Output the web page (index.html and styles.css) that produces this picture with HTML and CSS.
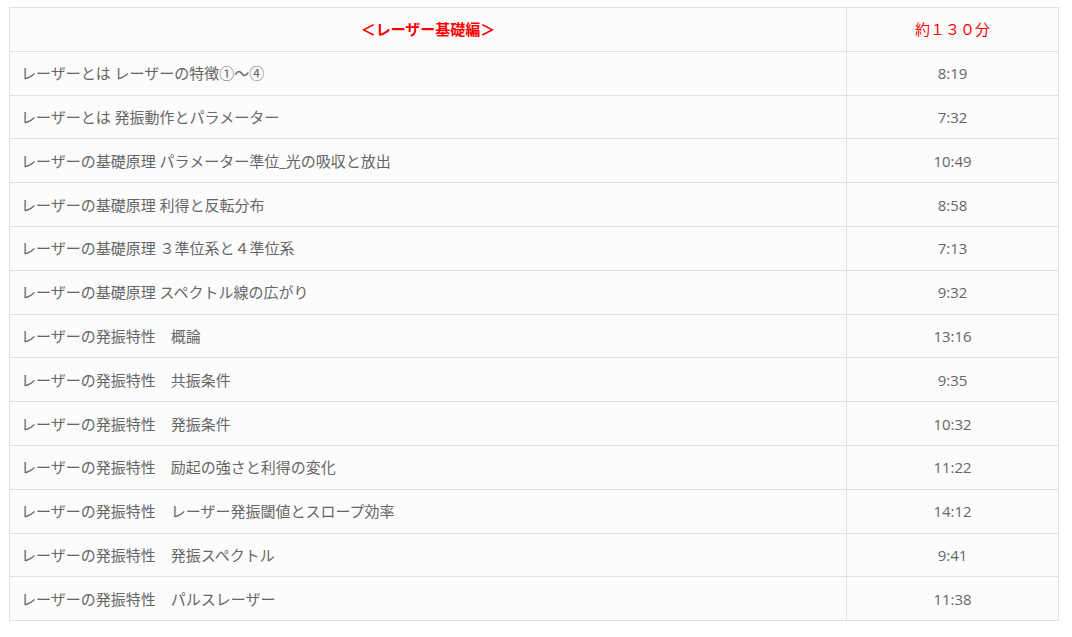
FILE: index.html
```html
<!DOCTYPE html>
<html lang="ja">
<head>
<meta charset="utf-8">
<link rel="stylesheet" href="styles.css">
</head>
<body>
<table class="course">
<colgroup><col class="c-title"><col class="c-time"></colgroup>
<thead>
<tr><th class="head-title">＜レーザー基礎編＞</th><th class="head-time">約１３０分</th></tr>
</thead>
<tbody>
<tr><td>レーザーとは レーザーの特徴①～④</td><td class="time">8:19</td></tr>
<tr><td>レーザーとは 発振動作とパラメーター</td><td class="time">7:32</td></tr>
<tr><td>レーザーの基礎原理 パラメーター準位_光の吸収と放出</td><td class="time">10:49</td></tr>
<tr><td>レーザーの基礎原理 利得と反転分布</td><td class="time">8:58</td></tr>
<tr><td>レーザーの基礎原理 ３準位系と４準位系</td><td class="time">7:13</td></tr>
<tr><td>レーザーの基礎原理 スペクトル線の広がり</td><td class="time">9:32</td></tr>
<tr><td>レーザーの発振特性　概論</td><td class="time">13:16</td></tr>
<tr><td>レーザーの発振特性　共振条件</td><td class="time">9:35</td></tr>
<tr><td>レーザーの発振特性　発振条件</td><td class="time">10:32</td></tr>
<tr><td>レーザーの発振特性　励起の強さと利得の変化</td><td class="time">11:22</td></tr>
<tr><td>レーザーの発振特性　レーザー発振閾値とスロープ効率</td><td class="time">14:12</td></tr>
<tr><td>レーザーの発振特性　発振スペクトル</td><td class="time">9:41</td></tr>
<tr><td>レーザーの発振特性　パルスレーザー</td><td class="time">11:38</td></tr>
</tbody>
</table>
</body>
</html>
```
FILE: styles.css
```css
html, body {
  margin: 0;
  padding: 0;
  background: #ffffff;
}
body {
  font-family: "Open Sans", "Noto Sans CJK JP", sans-serif;
  font-size: 15px;
  color: #666666;
}
.course {
  margin: 7px 0 0 9px;
  width: 1050px;
  border-collapse: collapse;
  background: #fcfcfc;
}
.c-title { width: 837px; }
.course th,
.course td {
  border: 1px solid #e0e0e0;
  height: 43.8px;
  padding: 0 11px;
  line-height: 22px;
  text-align: left;
  vertical-align: middle;
  box-sizing: border-box;
  font-weight: normal;
}
.course .head-title {
  text-align: center;
  color: #ff0000;
  font-weight: bold;
}
.course .head-time {
  text-align: center;
  color: #ff0000;
}
.course .time {
  text-align: center;
}
```
